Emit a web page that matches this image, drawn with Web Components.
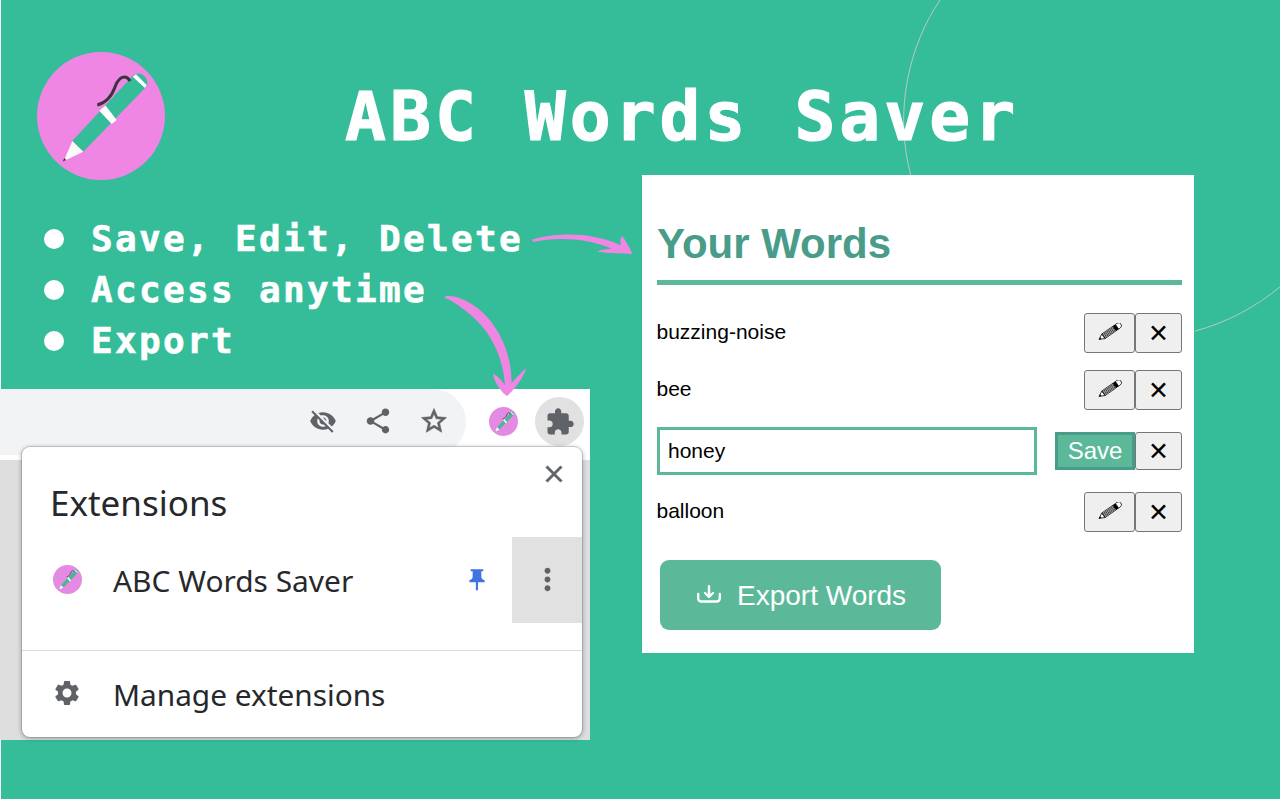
<!DOCTYPE html>
<html>
<head>
<meta charset="utf-8">
<title>ABC Words Saver</title>
<style>
  html, body { margin: 0; padding: 0; background: #fff; }
</style>
</head>
<body>
<abc-promo></abc-promo>
<script>
const ICONS = {
    eyeOff: 'M12 7c2.76 0 5 2.24 5 5 0 .65-.13 1.26-.36 1.83l2.92 2.92c1.51-1.26 2.7-2.89 3.43-4.75-1.73-4.39-6-7.5-11-7.5-1.4 0-2.74.25-3.98.7l2.16 2.16C10.74 7.13 11.35 7 12 7zM2 4.27l2.28 2.28.46.46C3.08 8.3 1.78 10.02 1 12c1.73 4.39 6 7.5 11 7.5 1.55 0 3.03-.3 4.38-.84l.42.42L19.73 22 21 20.73 3.27 3 2 4.27zM7.53 9.8l1.55 1.55c-.05.21-.08.43-.08.65 0 1.66 1.34 3 3 3 .22 0 .44-.03.65-.08l1.55 1.55c-.67.33-1.41.53-2.2.53-2.76 0-5-2.24-5-5 0-.79.2-1.53.53-2.2zm4.31-.78l3.15 3.15.02-.16c0-1.66-1.34-3-3-3l-.17.01z',
    share: 'M18 16.08c-.76 0-1.44.3-1.96.77L8.91 12.7c.05-.23.09-.46.09-.7s-.04-.47-.09-.7l7.05-4.11c.54.5 1.25.81 2.04.81 1.66 0 3-1.34 3-3s-1.34-3-3-3-3 1.34-3 3c0 .24.04.47.09.7L8.04 9.81C7.5 9.31 6.79 9 6 9c-1.66 0-3 1.34-3 3s1.34 3 3 3c.79 0 1.5-.31 2.04-.81l7.12 4.16c-.05.21-.08.43-.08.65 0 1.61 1.31 2.92 2.92 2.92 1.61 0 2.92-1.31 2.92-2.92s-1.31-2.92-2.92-2.92z',
    star: 'M22 9.24l-7.19-.62L12 2 9.19 8.63 2 9.24l5.46 4.73L5.82 21 12 17.27 18.18 21l-1.63-7.03L22 9.24zM12 15.4l-3.76 2.27 1-4.28-3.32-2.88 4.38-.38L12 6.1l1.71 4.04 4.38.38-3.32 2.88 1 4.28L12 15.4z',
    puzzle: 'M20.5 11H19V7c0-1.1-.9-2-2-2h-4V3.5C13 2.12 11.88 1 10.5 1S8 2.12 8 3.5V5H4c-1.1 0-1.99.9-1.99 2v3.8H3.5c1.49 0 2.7 1.21 2.7 2.7s-1.21 2.7-2.7 2.7H2V20c0 1.1.9 2 2 2h3.8v-1.5c0-1.49 1.21-2.7 2.7-2.7 1.49 0 2.7 1.21 2.7 2.7V22H17c1.1 0 2-.9 2-2v-4h1.5c1.38 0 2.5-1.12 2.5-2.5S21.88 11 20.5 11z',
    close: 'M19 6.41L17.59 5 12 10.59 6.41 5 5 6.41 10.59 12 5 17.59 6.41 19 12 13.41 17.59 19 19 17.59 13.41 12z',
    pin: 'M16 9V4h1c.55 0 1-.45 1-1s-.45-1-1-1H7c-.55 0-1 .45-1 1s.45 1 1 1h1v5c0 1.66-1.34 3-3 3v2h5.97v7l1 1 1-1v-7H19v-2c-1.66 0-3-1.34-3-3z',
    gear: 'M19.14 12.94c.04-.3.06-.61.06-.94 0-.32-.02-.64-.07-.94l2.03-1.58c.18-.14.23-.41.12-.61l-1.92-3.32c-.12-.22-.37-.29-.59-.22l-2.39.96c-.5-.38-1.03-.7-1.62-.94l-.36-2.54c-.04-.24-.24-.41-.48-.41h-3.84c-.24 0-.43.17-.47.41l-.36 2.54c-.59.24-1.13.57-1.62.94l-2.39-.96c-.22-.08-.47 0-.59.22L2.74 8.87c-.12.21-.08.47.12.61l2.03 1.58c-.05.3-.09.63-.09.94s.02.64.07.94l-2.03 1.58c-.18.14-.23.41-.12.61l1.92 3.32c.12.22.37.29.59.22l2.39-.96c.5.38 1.03.7 1.62.94l.36 2.54c.05.24.24.41.48.41h3.84c.24 0 .44-.17.47-.41l.36-2.54c.59-.24 1.13-.56 1.62-.94l2.39.96c.22.08.47 0 .59-.22l1.92-3.32c.12-.22.07-.47-.12-.61l-2.01-1.58zM12 15.6c-1.98 0-3.6-1.62-3.6-3.6s1.62-3.6 3.6-3.6 3.6 1.62 3.6 3.6-1.62 3.6-3.6 3.6z',
    dots: 'M12 8c1.1 0 2-.9 2-2s-.9-2-2-2-2 .9-2 2 .9 2 2 2zm0 2c-1.1 0-2 .9-2 2s.9 2 2 2 2-.9 2-2-.9-2-2-2zm0 6c-1.1 0-2 .9-2 2s.9 2 2 2 2-.9 2-2-.9-2-2-2z'
};

class MdIcon extends HTMLElement {
    connectedCallback() {
        const size = this.getAttribute('size') || 24;
        const color = this.getAttribute('color') || '#5f6368';
        const outline = this.hasAttribute('heavy') ? `stroke: ${color}; stroke-width: .5;` : '';
        this.attachShadow({ mode: 'open' }).innerHTML = `
            <style>
                :host { display: inline-flex; width: ${size}px; height: ${size}px; flex: none; }
                svg { width: 100%; height: 100%; display: block; fill: ${color}; ${outline} }
            </style>
            <svg viewBox="0 0 24 24"><path d="${ICONS[this.getAttribute('name')]}"></path></svg>
        `;
    }
}
customElements.define('md-icon', MdIcon);

class AbcLogo extends HTMLElement {
    connectedCallback() {
        const size = this.getAttribute('size') || 128;
        this.attachShadow({ mode: 'open' }).innerHTML = `
            <style>
                :host { display: block; width: ${size}px; height: ${size}px; flex: none; }
                svg { width: 100%; height: 100%; display: block; }
            </style>
            <svg viewBox="37 52 128 128">
                <circle cx="101" cy="116" r="64" fill="var(--logo-bg, #f086e4)"></circle>
                <path d="M72.3 141 L133 75.5 C137 72 143 73 146 78 C148 81 147.5 84.5 146 87 L83.3 151.7 Z" fill="var(--logo-pen, #35bc99)"></path>
                <path d="M72.3 141 L83.3 151.7 L66 160 L64 160.5 L65.5 157 Z" fill="#fafafa"></path>
                <path d="M62.8 161.5 L64.3 158 L66.2 159.9 Z" fill="#3a3340"></path>
                <path d="M99.3 110.7 L105.5 105.5 L116.7 120 L111.7 124 Z" fill="#fff"></path>
                <path d="M132.7 76.7 L136 74.3 L146.7 85 L145 88 Z" fill="#fff"></path>
                <path d="M97.3 105 C107 102.5 112.5 94 115 87 C117.5 80 120.5 76.6 125 77 C127.5 77.3 129 79 130 81" fill="none" stroke="#3a3340" stroke-width="3"></path>
            </svg>
        `;
    }
}
customElements.define('abc-logo', AbcLogo);

class FeatureList extends HTMLElement {
    connectedCallback() {
        const items = JSON.parse(this.getAttribute('items') || '[]');
        this.attachShadow({ mode: 'open' }).innerHTML = `
            <style>
                :host { display: block; }
                ul { list-style: none; margin: 0; padding: 0 0 0 44px; }
                li {
                    display: flex; align-items: center; gap: 27px; height: 51px;
                    font: bold 36px "DejaVu Sans Mono", monospace; letter-spacing: 2.33px; color: #fff; white-space: pre;
                    -webkit-text-stroke: .6px #fff;
                }
                li::before {
                    content: ""; width: 20px; height: 20px; border-radius: 50%;
                    background: #fff; flex: none;
                }
            </style>
            <ul>${items.map(item => `<li>${item}</li>`).join('')}</ul>
        `;
    }
}
customElements.define('feature-list', FeatureList);

class ExtensionsPopup extends HTMLElement {
    connectedCallback() {
        this.attachShadow({ mode: 'open' }).innerHTML = `
            <style>
                :host {
                    display: block; position: absolute; left: 22px; top: 58px; width: 560px; height: 290px;
                    background: #fff; border-radius: 8px; box-sizing: border-box;
                    box-shadow: 0 0 0 1px rgba(60,64,67,.18), 0 1px 4px 1px rgba(60,64,67,.35);
                    font-family: "Noto Sans", "Open Sans", sans-serif; color: #26282b;
                }
                .panel { display: flex; flex-direction: column; height: 100%; }
                header { height: 90px; display: flex; justify-content: space-between; padding: 13px 14px 0 28px; box-sizing: border-box; }
                h2 { margin: 19px 0 0; font-weight: 400; font-size: 35px; line-height: 48px; }
                .row { display: flex; align-items: center; height: 86px; flex: none; }
                .row abc-logo { margin: -2px 0 0 31px; --logo-bg: #e48ae2; --logo-pen: #49b795; }
                .name { margin-left: 31px; font-size: 29.9px; flex: 1; }
                .pin { margin-right: 22px; }
                .more { width: 70px; height: 86px; background: #e1e1e1; display: flex; align-items: center; justify-content: center; padding-bottom: 2px; box-sizing: border-box; }
                .rule { margin-top: 27px; border-top: 1px solid #dadce0; }
                .manage { display: flex; align-items: center; height: 86px; }
                .manage md-icon { margin: -2px 0 0 30px; }
                .manage span { margin-left: 31px; font-size: 29.8px; }
            </style>
            <div class="panel">
                <header>
                    <h2>Extensions</h2>
                    <md-icon name="close" size="28" heavy></md-icon>
                </header>
                <div class="row">
                    <abc-logo size="29"></abc-logo>
                    <span class="name">ABC Words Saver</span>
                    <md-icon class="pin" name="pin" size="26" color="#3f75e3"></md-icon>
                    <div class="more"><md-icon name="dots" size="35"></md-icon></div>
                </div>
                <div class="rule"></div>
                <div class="manage">
                    <md-icon name="gear" size="30"></md-icon>
                    <span>Manage extensions</span>
                </div>
            </div>
        `;
    }
}
customElements.define('extensions-popup', ExtensionsPopup);

class BrowserMock extends HTMLElement {
    connectedCallback() {
        this.attachShadow({ mode: 'open' }).innerHTML = `
            <style>
                :host { display: block; position: relative; width: 590px; height: 351px; background: #dedede; }
                .bar { height: 71px; background: #fff; display: flex; align-items: center; }
                .omnibox {
                    width: 466px; height: 66px; align-self: flex-start; background: #f1f3f4;
                    border-radius: 0 33px 33px 0;
                    display: flex; align-items: center; justify-content: flex-end; gap: 26px; padding-right: 17px; box-sizing: border-box;
                }
                .omnibox md-icon { margin-top: -2px; }
                .bar abc-logo { margin: -6px 0 0 23px; --logo-bg: #e48ae2; --logo-pen: #49b795; }
                .puzzle {
                    width: 49px; height: 49px; margin: -6px 0 0 17px; border-radius: 50%; background: #e1e1e1;
                    display: flex; align-items: center; justify-content: center;
                }
            </style>
            <div class="bar">
                <div class="omnibox">
                    <md-icon name="eyeOff" size="28"></md-icon>
                    <md-icon name="share" size="30"></md-icon>
                    <md-icon name="star" size="30" heavy></md-icon>
                </div>
                <abc-logo size="29"></abc-logo>
                <div class="puzzle"><md-icon name="puzzle" size="30"></md-icon></div>
            </div>
            <slot></slot>
        `;
    }
}
customElements.define('browser-mock', BrowserMock);

const PENCIL = `
    <svg class="pencil" viewBox="0 0 24 18">
        <g transform="translate(1 16.4) rotate(-35)" fill="none" stroke="#000" stroke-width=".7">
            <path d="M0 0 L5.5 -2.8 V2.8 Z" fill="#fff"></path>
            <path d="M0 0 L2.2 -1.1 V1.1 Z" fill="#000" stroke="none"></path>
            <rect x="5.5" y="-2.8" width="13.5" height="5.6" fill="#fff"></rect>
            <path d="M5.5 -1.7 H19 M5.5 -.6 H19 M5.5 .6 H19 M5.5 1.7 H19"></path>
            <rect x="19" y="-3" width="3" height="6" fill="#000" stroke="none"></rect>
            <path d="M22 -2.8 H24 A2.8 2.8 0 0 1 24 2.8 H22 Z" fill="#fff"></path>
        </g>
    </svg>`;

class WordRow extends HTMLElement {
    connectedCallback() {
        const word = this.getAttribute('word');
        const editing = this.hasAttribute('editing');
        this.attachShadow({ mode: 'open' }).innerHTML = `
            <style>
                :host { display: flex; align-items: center; justify-content: space-between; font: 21px "Liberation Sans", Arial, sans-serif; color: #000; }
                .btns { display: flex; }
                span { margin-left: -.5px; margin-top: -2px; }
                button {
                    height: 40px; margin: 0; padding: 0; background: #efefef; border: 1px solid #767676; border-radius: 3px;
                    box-sizing: border-box; font-family: "DejaVu Sans", sans-serif; color: #000; font-size: 25px; line-height: 1;
                    display: flex; align-items: center; justify-content: center;
                }
                .edit { width: 51px; }
                .del { width: 47px; }
                .pencil { width: 24px; height: 18px; margin-top: -2px; }
                .field {
                    width: 380px; height: 48px; box-sizing: border-box; border: 3px solid #5bb99a; padding: 0 8px;
                    display: flex; align-items: center; font-size: 21px;
                }
                .save {
                    width: 80px; height: 38px; background: #5bb99a; border: 3px solid #4a9c8a; border-radius: 0; color: #fff;
                    font: 24px "Liberation Sans", Arial, sans-serif;
                }
                .edit-btns { display: flex; align-items: center; }
            </style>
            ${editing ? `
                <div class="field">${word}</div>
                <div class="edit-btns">
                    <button class="save">Save</button>
                    <button class="del" style="height:38px">✕</button>
                </div>
            ` : `
                <span>${word}</span>
                <div class="btns">
                    <button class="edit">${PENCIL}</button>
                    <button class="del">✕</button>
                </div>
            `}
        `;
    }
}
customElements.define('word-row', WordRow);

class WordsCard extends HTMLElement {
    connectedCallback() {
        this.attachShadow({ mode: 'open' }).innerHTML = `
            <style>
                :host {
                    display: block; width: 552px; height: 478px; background: #fff; box-sizing: border-box;
                    padding: 0 12px 0 15px; font-family: "Liberation Sans", Arial, sans-serif;
                }
                h1 {
                    margin: 0; padding: 45px 0 12px; font-size: 42px; line-height: 48px; color: #4a9c8a;
                    border-bottom: 5px solid #5bb99a;
                }
                .rows { display: flex; flex-direction: column; gap: 17px; margin-top: 28px; }
                .export {
                    display: inline-flex; align-items: center; gap: 16px; margin: 28px 0 0 3px; width: 281px; height: 70px;
                    box-sizing: border-box; padding: 2px 0 0 37px; background: #5bb99a; color: #fff; border-radius: 9px; font-size: 28px;
                }
                svg { width: 24px; height: 18px; margin-top: -4px; flex: none; fill: none; stroke: #fff; stroke-width: 2.4; stroke-linecap: round; stroke-linejoin: round; }
            </style>
            <h1>Your Words</h1>
            <div class="rows"><slot></slot></div>
            <div class="export">
                <svg viewBox="0 0 24 18"><path d="M1.2 9v4.5a3 3 0 0 0 3 3h15.6a3 3 0 0 0 3-3V9M12 1.2v10M8 8l4 4 4-4"></path></svg>
                <span>Export Words</span>
            </div>
        `;
    }
}
customElements.define('words-card', WordsCard);

class AbcPromo extends HTMLElement {
    connectedCallback() {
        this.attachShadow({ mode: 'open' }).innerHTML = `
            <style>
                :host {
                    display: block; position: relative; width: 1280px; height: 800px; overflow: hidden;
                    background: #35bc99; box-shadow: inset 1px -1px 0 #fff;
                }
                .deco { position: absolute; inset: 0; width: 1280px; height: 800px; pointer-events: none; }
                .top { position: relative; display: flex; height: 175px; }
                .top abc-logo { margin: 52px 0 -5px 37px; }
                h1 {
                    margin: 0; flex: 1; box-sizing: border-box; padding: 72px 0 0 180px;
                    font: bold 68px/90px "DejaVu Sans Mono", monospace; letter-spacing: 4px; color: #fff; white-space: pre;
                    -webkit-text-stroke: 1.2px #fff;
                }
                .main { position: relative; display: flex; }
                .left { width: 642px; padding-top: 38px; box-sizing: border-box; }
                .left browser-mock { margin-top: 23px; }
                .arrows { position: absolute; inset: 0; width: 1280px; height: 800px; pointer-events: none; }
            </style>
            <svg class="deco" viewBox="0 0 1280 800">
                <path d="M940 0 C910 44 893 110 911 176 M1195 331 C1226 323 1256 307 1281 286" fill="none" stroke="#b7c9c4" stroke-width="1"></path>
            </svg>
            <div class="top">
                <abc-logo size="128"></abc-logo>
                <h1>ABC Words Saver</h1>
            </div>
            <div class="main">
                <div class="left">
                    <feature-list items='["Save, Edit, Delete","Access anytime","Export"]'></feature-list>
                    <browser-mock><extensions-popup></extensions-popup></browser-mock>
                </div>
                <words-card>
                    <word-row word="buzzing-noise"></word-row>
                    <word-row word="bee"></word-row>
                    <word-row word="honey" editing></word-row>
                    <word-row word="balloon"></word-row>
                </words-card>
            </div>
            <svg class="arrows" viewBox="0 0 1280 800">
                <path fill="#f086e4" d="M532 239.5 C552 234 588 230 621 245.5 C620 242 620 238 622 236 C626 241 630 248 632.5 254 C622 253.5 608 253 598 252 C599 250 603 249 612 249 C588 238 556 237 533 242 Z"></path>
                <path fill="#f086e4" d="M445 296.5 C452 295 462 298 473 305 C495 319 512 350 511.5 383 C516 378 522 372 526 368 C525 375 516 388 507 396 C502 393 494 382 493 374 C497 375 502 381 505 385 C503 354 488 326 463 309 C457 304 451 300 445 298 Z"></path>
            </svg>
        `;
    }
}
customElements.define('abc-promo', AbcPromo);
</script>
</body>
</html>
